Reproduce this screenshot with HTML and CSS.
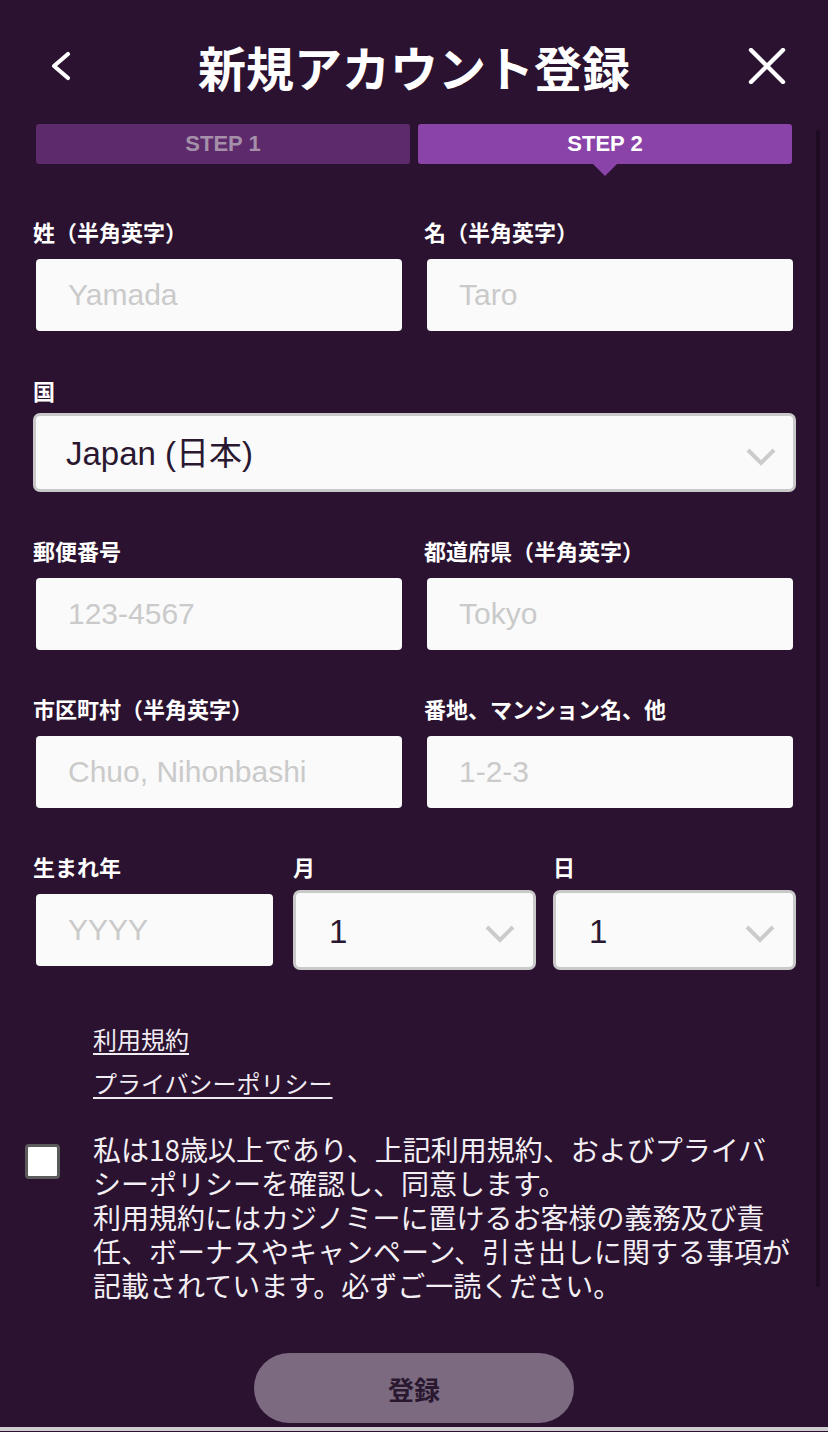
FILE: index.html
```html
<!DOCTYPE html>
<html lang="ja">
<head>
<meta charset="utf-8">
<title>新規アカウント登録</title>
<link rel="stylesheet" href="styles.css">
</head>
<body>
<div class="scrollbar"></div>
<header class="header">
  <button class="icon-btn back" aria-label="戻る">
    <svg width="24" height="32" viewBox="0 0 24 32"><polyline points="19,4 5,16 19,28" fill="none" stroke="#fff" stroke-width="4.2" stroke-linecap="round" stroke-linejoin="round"/></svg>
  </button>
  <h1 class="title">新規アカウント登録</h1>
  <button class="icon-btn close" aria-label="閉じる">
    <svg width="38" height="36" viewBox="0 0 38 36"><path d="M3 2 L35 34 M35 2 L3 34" fill="none" stroke="#fff" stroke-width="4.4" stroke-linecap="round"/></svg>
  </button>
</header>

<div class="steps">
  <div class="step">STEP 1</div>
  <div class="step active">STEP 2</div>
</div>

<form class="form">
  <div class="row two">
    <div class="field">
      <label class="label">姓（半角英字）</label>
      <input class="input" type="text" placeholder="Yamada">
    </div>
    <div class="field">
      <label class="label">名（半角英字）</label>
      <input class="input" type="text" placeholder="Taro">
    </div>
  </div>

  <div class="row country-row">
    <div class="field">
      <label class="label">国</label>
      <div class="select country">
        <span class="select-text">Japan (日本)</span>
        <svg class="chev" width="32" height="20" viewBox="0 0 32 20"><polyline points="3,3 16,16 29,3" fill="none" stroke="#cbcbcb" stroke-width="4"/></svg>
      </div>
    </div>
  </div>

  <div class="row two">
    <div class="field">
      <label class="label">郵便番号</label>
      <input class="input" type="text" placeholder="123-4567">
    </div>
    <div class="field">
      <label class="label">都道府県（半角英字）</label>
      <input class="input" type="text" placeholder="Tokyo">
    </div>
  </div>

  <div class="row two">
    <div class="field">
      <label class="label">市区町村（半角英字）</label>
      <input class="input" type="text" placeholder="Chuo, Nihonbashi">
    </div>
    <div class="field">
      <label class="label">番地、マンション名、他</label>
      <input class="input" type="text" placeholder="1-2-3">
    </div>
  </div>

  <div class="row three">
    <div class="field">
      <label class="label">生まれ年</label>
      <input class="input" type="text" placeholder="YYYY">
    </div>
    <div class="field">
      <label class="label">月</label>
      <div class="select small">
        <span class="select-text">1</span>
        <svg class="chev" width="32" height="20" viewBox="0 0 32 20"><polyline points="3,3 16,16 29,3" fill="none" stroke="#cbcbcb" stroke-width="4"/></svg>
      </div>
    </div>
    <div class="field">
      <label class="label">日</label>
      <div class="select small">
        <span class="select-text">1</span>
        <svg class="chev" width="32" height="20" viewBox="0 0 32 20"><polyline points="3,3 16,16 29,3" fill="none" stroke="#cbcbcb" stroke-width="4"/></svg>
      </div>
    </div>
  </div>
</form>

<div class="links">
  <a class="link" href="#">利用規約</a>
  <a class="link" href="#">プライバシーポリシー</a>
</div>

<div class="consent">
  <input class="agree" type="checkbox" id="agree">
  <label class="consent-text" for="agree">私は18歳以上であり、上記利用規約、およびプライバシーポリシーを確認し、同意します。<br>利用規約にはカジノミーに置けるお客様の義務及び責任、ボーナスやキャンペーン、引き出しに関する事項が記載されています。必ずご一読ください。</label>
</div>

<div class="actions">
  <button class="submit" type="button">登録</button>
</div>

<div class="edge"></div>
</body>
</html>
```

FILE: styles.css
```css
* { box-sizing: border-box; }

html, body {
  margin: 0;
  padding: 0;
  height: 1432px;
  overflow: hidden;
}

body {
  position: relative;
  background: #2a1230;
  color: #ffffff;
  font-family: "Noto Sans CJK JP", "Noto Sans", sans-serif;
}

.scrollbar {
  position: absolute;
  left: 816px;
  top: 130px;
  width: 4px;
  height: 1157px;
  background: #1d0b21;
  border-radius: 2px;
}

.header {
  display: grid;
  grid-template-columns: 1fr auto 1fr;
  align-items: center;
  height: 124px;
  padding-top: 8px;
}

.icon-btn {
  background: none;
  border: 0;
  padding: 0;
  display: flex;
}

.back { justify-self: start; margin-left: 49px; }
.close { justify-self: end; margin-right: 42px; }

.title {
  margin: 0;
  font-size: 48px;
  font-weight: 700;
  line-height: 1;
  color: #ffffff;
}

.steps {
  display: grid;
  grid-template-columns: 1fr 1fr;
  gap: 8px;
  margin: 0 36px;
  height: 40px;
}

.step {
  position: relative;
  display: flex;
  align-items: center;
  justify-content: center;
  background: #5d2b6c;
  color: #a58fa9;
  border-radius: 3px;
  font-family: "Liberation Sans", sans-serif;
  font-weight: 700;
  font-size: 22px;
}

.step.active {
  background: #8a43a8;
  color: #ffffff;
}

.step.active::after {
  content: "";
  position: absolute;
  left: 50%;
  bottom: -12px;
  margin-left: -12px;
  border-left: 12px solid transparent;
  border-right: 12px solid transparent;
  border-top: 12px solid #8a43a8;
}

.form {
  display: flex;
  flex-direction: column;
  gap: 43px;
  margin-top: 52px;
  padding: 0 32px 0 33px;
}

.country-row { margin-top: 1px; }

.row.two {
  display: grid;
  grid-template-columns: 1fr 1fr;
  column-gap: 19px;
}

.row.three {
  display: grid;
  grid-template-columns: 1fr 1fr 1fr;
  column-gap: 17px;
  align-items: start;
}

.field {
  display: flex;
  flex-direction: column;
}

.label {
  font-size: 22px;
  font-weight: 700;
  line-height: 31px;
  color: #ffffff;
}

.input {
  height: 72px;
  margin: 12px 3px 0 3px;
  width: calc(100% - 6px);
  border: 0;
  border-radius: 4px;
  background: #fafafa;
  padding: 0 0 0 32px;
  font-family: "Liberation Sans", sans-serif;
  font-size: 30px;
  color: #2a1830;
  outline: none;
}

.input::placeholder {
  color: #cacaca;
  opacity: 1;
}

.select {
  display: flex;
  align-items: center;
  justify-content: space-between;
  height: 79px;
  margin-top: 7px;
  border: 3px solid #c9c9c9;
  border-radius: 7px;
  background: #fafafa;
  padding: 0 16px 0 30px;
  color: #2a1830;
  font-family: "Liberation Sans", "Noto Sans CJK JP", sans-serif;
  font-size: 33px;
}

.select.small {
  height: 80px;
  margin-top: 8px;
  padding-left: 33px;
  padding-right: 17px;
}

.select-text { line-height: 1; padding-top: 2px; }

.chev { margin-top: 8px; flex: none; }

.links {
  display: flex;
  flex-direction: column;
  align-items: flex-start;
  gap: 10px;
  margin-top: 52px;
  padding-left: 93px;
}

.link {
  font-size: 24px;
  line-height: 34px;
  color: #f1ebf2;
  text-decoration: underline;
  text-decoration-thickness: 2px;
  text-underline-offset: 4px;
}

.consent {
  display: flex;
  align-items: flex-start;
  gap: 33px;
  margin-top: 32px;
  padding: 0 33px 0 25px;
}

.agree {
  appearance: none;
  -webkit-appearance: none;
  flex: none;
  width: 35px;
  height: 35px;
  margin: 12px 0 0 0;
  background: #ffffff;
  border: 3px solid #5b5b5b;
  border-radius: 4px;
}

.consent-text {
  flex: 1;
  font-size: 28px;
  line-height: 34px;
  color: #f3eff4;
  line-break: strict;
}

.actions {
  display: flex;
  justify-content: center;
  margin-top: 51px;
}

.submit {
  width: 320px;
  height: 70px;
  border: 0;
  border-radius: 35px;
  background: #7b6a80;
  color: #2a1830;
  font-family: "Noto Sans CJK JP", sans-serif;
  font-size: 26px;
  font-weight: 700;
}

.edge {
  height: 4px;
  margin-top: 4px;
  background: #d0cdd1;
}
```
